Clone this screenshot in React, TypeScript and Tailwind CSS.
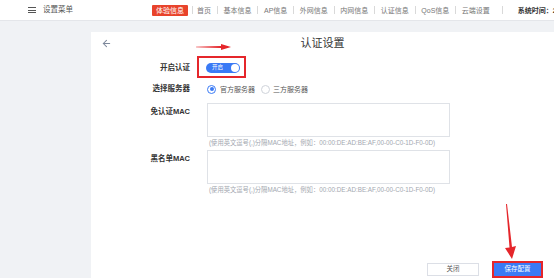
import React from 'react';
import { ArrowLeft } from 'lucide-react';

const navItems = ['首页', '基本信息', 'AP信息', '外网信息', '内网信息', '认证信息', 'QoS信息', '云端设置'];

function Sep({ className = 'mx-[5.75px]' }: { className?: string }) {
  return <span className={`w-px h-[8px] bg-[#d9d9d9] shrink-0 ${className}`} />;
}

export default function App() {
  return (
    <div className="w-[554px] h-[278px] overflow-hidden bg-[#f0f2f5] flex flex-col font-['Liberation_Sans','Noto_Sans_CJK_SC',sans-serif]">
      {/* Top bar */}
      <header className="h-[21px] shrink-0 bg-white border-b border-[#e4e6ea] flex items-center pl-[28px] whitespace-nowrap overflow-hidden">
        <div className="flex flex-col gap-[1.5px] w-[8px] shrink-0">
          <span className="h-px bg-[#555]" />
          <span className="h-px bg-[#555]" />
          <span className="h-px bg-[#555]" />
        </div>
        <span className="ml-[7px] text-[7.5px] text-[#555] leading-none">设置菜单</span>

        <nav className="ml-[79px] flex items-center text-[7px] text-[#777] leading-none">
          <span className="h-[11px] px-[4px] bg-[#e8432b] text-white flex items-center rounded-[1px]">体验信息</span>
          {navItems.map((item, i) => (
            <React.Fragment key={item}>
              <Sep className={i === 0 ? 'mx-[4px]' : 'mx-[5.75px]'} />
              <span>{item}</span>
            </React.Fragment>
          ))}
          <Sep className="ml-[12px] mr-[15px]" />
          <span className="font-bold text-[#333]">系统时间：2</span>
        </nav>
      </header>

      {/* Body */}
      <main className="flex-1 flex pl-[91px] pt-[11px]">
        <section className="relative flex-1 bg-white flex flex-col">
          {/* Title row */}
          <div className="h-[22px] grid grid-cols-[1fr_auto_1fr] items-center">
            <span className="pl-[10px] text-[#7d889b]">
              <ArrowLeft size={11} strokeWidth={2.2} />
            </span>
            <h1 className="text-[11px] text-[#333] leading-none">认证设置</h1>
            <span />
          </div>

          {/* Enable auth */}
          <div className="mt-[4px] h-[20px] flex items-center">
            <label className="w-[99px] text-right text-[7.5px] font-bold text-[#333]">开启认证</label>
            <div className="ml-[16px] w-[34px] h-[10px] rounded-full bg-[#3a7af5] flex items-center justify-between pl-[6px] pr-[1px]">
              <span className="text-[5.5px] text-white leading-none">开启</span>
              <span className="w-[8px] h-[8px] rounded-full bg-white" />
            </div>
          </div>

          {/* Server */}
          <div className="mt-[1px] h-[20px] flex items-center">
            <label className="w-[99px] text-right text-[7.5px] font-bold text-[#333]">选择服务器</label>
            <div className="ml-[17px] flex items-center text-[7px] text-[#555] leading-none">
              <span className="w-[9px] h-[9px] rounded-full border border-[#3a7af5] flex items-center justify-center">
                <span className="w-[4px] h-[4px] rounded-full bg-[#3a7af5]" />
              </span>
              <span className="ml-[4px]">官方服务器</span>
              <span className="ml-[6px] w-[9px] h-[9px] rounded-full border border-[#cfd3da]" />
              <span className="ml-[3px]">三方服务器</span>
            </div>
          </div>

          {/* Free MAC */}
          <div className="mt-[4px] flex items-start">
            <label className="w-[99px] pt-[4px] text-right text-[7.5px] leading-[9px] font-bold text-[#333]">免认证MAC</label>
            <div className="ml-[17px] flex flex-col">
              <textarea className="w-[243px] h-[34px] border border-[#dfe2e7] resize-none outline-none" />
              <p className="mt-[1px] h-[10px] leading-[10px] pl-[2px] text-[6.3px] text-[#a3a8b0] whitespace-nowrap">
                (使用英文逗号(,)分隔MAC地址，例如：00:00:DE:AD:BE:AF,00-00-C0-1D-F0-0D)
              </p>
            </div>
          </div>

          {/* Blacklist MAC */}
          <div className="mt-[2px] flex items-start">
            <label className="w-[99px] pt-[4px] text-right text-[7.5px] leading-[9px] font-bold text-[#333]">黑名单MAC</label>
            <div className="ml-[17px] flex flex-col">
              <textarea className="w-[243px] h-[34px] border border-[#dfe2e7] resize-none outline-none" />
              <p className="mt-[1px] h-[10px] leading-[10px] pl-[2px] text-[6.3px] text-[#a3a8b0] whitespace-nowrap">
                (使用英文逗号(,)分隔MAC地址，例如：00:00:DE:AD:BE:AF,00-00-C0-1D-F0-0D)
              </p>
            </div>
          </div>

          {/* Footer buttons */}
          <div className="mt-auto mb-[2px] flex justify-end items-center pr-[13px] gap-[15px]">
            <button className="w-[52px] h-[13px] border border-[#dcdfe6] bg-white text-[6.5px] text-[#555] leading-none">关闭</button>
            <button className="w-[47px] h-[13px] bg-[#3a7af5] text-[6.5px] text-white leading-none outline-2 outline-[#e5262b]">保存配置</button>
          </div>

          {/* Annotations */}
          <div className="absolute left-[106px] top-[24px] w-[49px] h-[22px] border-2 border-[#e5262b]" />
          <svg className="absolute left-[105px] top-[11px]" width="35" height="8" viewBox="0 0 35 8">
            <polygon points="0,3.7 25,2.9 25,1 35,4 25,7 25,5.1 0,4.3" fill="#e5262b" />
          </svg>
          <svg className="absolute left-[412px] top-[172px]" width="14" height="55" viewBox="0 0 14 55">
            <polygon points="3,0 4,0 9,43 13,42 9,55 2,44 6.5,43.5" fill="#e5262b" />
          </svg>
        </section>
      </main>
    </div>
  );
}
